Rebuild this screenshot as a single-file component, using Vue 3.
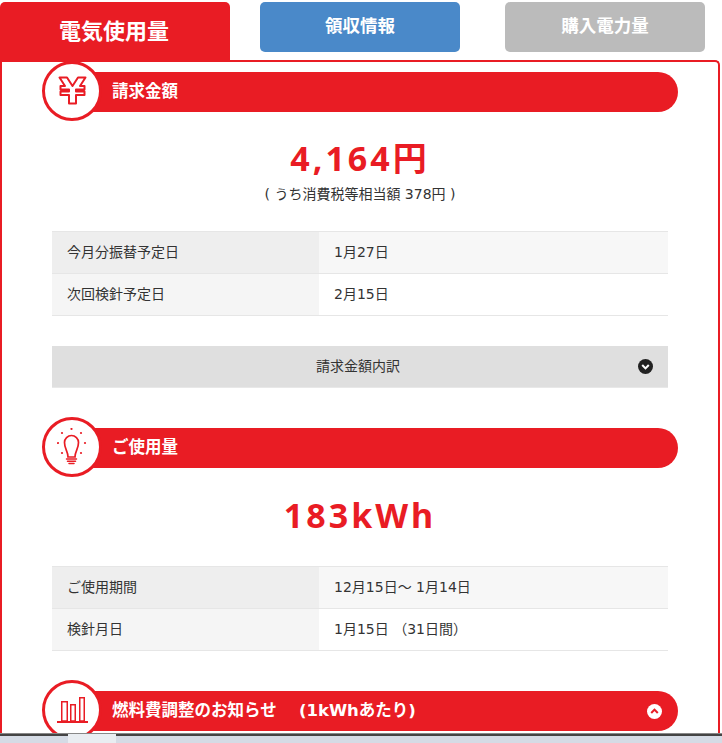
<script setup>
const billing = [
  { label: '今月分振替予定日', value: '1月27日' },
  { label: '次回検針予定日', value: '2月15日' },
]
const usage = [
  { label: 'ご使用期間', value: '12月15日～ 1月14日' },
  { label: '検針月日', value: '1月15日 （31日間）' },
]
const rays = [[14.5, 1], [5, 5], [24, 5], [1, 15], [28, 15], [5, 25], [24, 25]]
</script>

<template>
  <div class="page">
    <nav class="tabs">
      <div class="tab tab-active">電気使用量</div>
      <div class="tab tab-blue">領収情報</div>
      <div class="tab tab-grey">購入電力量</div>
    </nav>

    <main class="panel">
      <section class="section">
        <header class="head">
          <span class="badge">
            <svg viewBox="0 0 29 29" width="29" height="29">
              <path d="M1.500 1.500h7.500L14.500 10 20 1.500h7.500L22 10h4.500v3.500H18v2h8.500V19H18v8.500h-7V19H2.500v-3.500H11v-2H2.500V10H7z" fill="#fff" stroke="#e91c24" stroke-width="2" stroke-linejoin="round"/>
            </svg>
          </span>
          <div class="bar"><h2 class="bar-title">請求金額</h2></div>
        </header>
        <p class="amount">4,164円</p>
        <p class="note">( うち消費税等相当額 378円 )</p>
        <div class="table">
          <div v-for="row in billing" :key="row.label" class="row">
            <div class="cell-label">{{ row.label }}</div>
            <div class="cell-value">{{ row.value }}</div>
          </div>
        </div>
        <div class="details">
          <span>請求金額内訳</span>
          <svg class="chevron" viewBox="0 0 16 16" width="15" height="15">
            <circle cx="8" cy="8" r="8" fill="#222"/>
            <path d="M4.500 6.500 8 10l3.500-3.500" fill="none" stroke="#fff" stroke-width="2.200"/>
          </svg>
        </div>
      </section>

      <section class="section section-usage">
        <header class="head">
          <span class="badge">
            <svg viewBox="0 0 30 38" width="30" height="38" fill="none" stroke="#e91c24" stroke-width="1.500" stroke-linecap="round">
              <path d="M11 29c0-6-3.500-8-3.500-14.500a7 7 0 0 1 14 0C21.500 21 18 23 18 29z" stroke-width="1.700"/>
              <path d="M9.500 31h10M10.500 33.200h8M12 35.400h5" stroke-width="1.500"/>
              <circle v-for="(p, i) in rays" :key="i" :cx="p[0]" :cy="p[1]" r="1.100" fill="#e91c24" stroke="none"/>
            </svg>
          </span>
          <div class="bar"><h2 class="bar-title">ご使用量</h2></div>
        </header>
        <p class="amount amount-usage">183kWh</p>
        <div class="table">
          <div v-for="row in usage" :key="row.label" class="row">
            <div class="cell-label">{{ row.label }}</div>
            <div class="cell-value">{{ row.value }}</div>
          </div>
        </div>
      </section>

      <section class="section section-fuel">
        <header class="head">
          <span class="badge">
            <svg viewBox="0 0 31 26" width="31" height="26" fill="#fff" stroke="#e91c24" stroke-width="1.500">
              <path d="M4.750 4.750h5.500V24h-5.500zM13.750 7.750h4.500V24h-4.500zM22.750.75h4.500V24h-4.500z"/>
              <path d="M0 25h31" stroke-width="2"/>
            </svg>
          </span>
          <div class="bar">
            <h2 class="bar-title bar-title-wide">燃料費調整のお知らせ　 (1kWhあたり)</h2>
            <svg class="chevron-up" viewBox="0 0 16 16" width="15" height="15">
              <circle cx="8" cy="8" r="8" fill="#fff"/>
              <path d="M4.500 9.500 8 6l3.500 3.500" fill="none" stroke="#e91c24" stroke-width="2.200"/>
            </svg>
          </div>
        </header>
      </section>
    </main>

    <footer class="chrome"><span class="chrome-tab"></span></footer>
  </div>
</template>

<style scoped>
.page {
  width: 722px;
  height: 743px;
  display: flex;
  flex-direction: column;
  overflow: hidden;
  background: #fff;
  font-family: "DejaVu Sans", "Noto Sans CJK JP", sans-serif;
  color: #333;
}
.tabs {
  flex: none;
  height: 60px;
  padding-top: 2px;
  box-sizing: border-box;
  display: flex;
  align-items: flex-start;
}
.tab {
  box-sizing: border-box;
  display: flex;
  align-items: center;
  justify-content: center;
  color: #fff;
  font-weight: 700;
  border-radius: 5px;
  width: 200px;
  height: 50px;
  font-size: 17.500px;
  padding-bottom: 5px;
}
.tab-active {
  width: 230px;
  height: 58px;
  background: #e91c24;
  border-radius: 5px 5px 0 0;
  font-size: 22px;
  padding: 0 2px 5px 0;
}
.tab-blue { background: #4a89c9; margin-left: 30px; }
.tab-grey { background: #bbb; margin-left: 45px; }
.panel {
  flex: 1;
  min-height: 0;
  box-sizing: border-box;
  width: 720px;
  border: 2px solid #e91c24;
  border-bottom: 0;
  border-radius: 0 5px 0 0;
  padding: 10px 40px 0;
  overflow: hidden;
}
.section-usage { margin-top: 40px; }
.section-fuel { margin-top: 40px; }
.head {
  position: relative;
  height: 40px;
  padding-left: 30px;
}
.bar {
  height: 40px;
  background: #e91c24;
  border-radius: 0 20px 20px 0;
  display: flex;
  align-items: center;
  padding: 0 16px 1px 40px;
  box-sizing: border-box;
  color: #fff;
}
.badge {
  position: absolute;
  z-index: 1;
  left: 0;
  top: -11.500px;
  width: 60px;
  height: 60px;
  box-sizing: border-box;
  border: 3px solid #e91c24;
  border-radius: 50%;
  background: #fff;
  display: flex;
  align-items: center;
  justify-content: center;
}
.bar-title {
  margin: 0;
  font-size: 16.500px;
  line-height: 20px;
  font-weight: 700;
}
.bar-title-wide { flex: 1; }
.amount {
  margin: 25px 0 0;
  text-align: center;
  font-family: "Noto Sans", "Noto Sans CJK JP", sans-serif;
  font-size: 34px;
  letter-spacing: 3px;
  line-height: 42px;
  font-weight: 700;
  color: #e91c24;
}
.amount-usage { margin-bottom: 30px; margin-top: 26px; }
.note {
  margin: 5px 0 0;
  text-align: center;
  font-size: 14px;
  line-height: 20px;
}
.table {
  margin: 27px 10px 0;
  border-top: 1px solid #e6e6e6;
}
.amount-usage + .table { margin-top: 0; }
.row {
  display: grid;
  grid-template-columns: 267px 1fr;
  height: 42px;
  box-sizing: border-box;
  border-bottom: 1px solid #e6e6e6;
  font-size: 14px;
  line-height: 41px;
}
.cell-label { background: #eee; padding-left: 15px; }
.cell-value { background: #f7f7f7; padding-left: 15px; }
.row:nth-child(2) .cell-label { background: #f5f5f5; }
.row:nth-child(2) .cell-value { background: #fff; }
.details {
  position: relative;
  margin: 30px 10px 0;
  height: 42px;
  box-sizing: border-box;
  background: #dfdfdf;
  border-bottom: 1px solid #e8e8e8;
  display: flex;
  align-items: center;
  justify-content: center;
  font-size: 14px;
  padding: 0 4px 3px 0;
}
.chevron {
  position: absolute;
  right: 15px;
  top: 13px;
}
.chevron-up { flex: none; margin-top: 1px; }
.chrome {
  flex: none;
  height: 10px;
  box-sizing: border-box;
  background: #d5dbe5;
  border-top: 1px solid #888;
  box-shadow: inset 0 2px 0 #444;
  display: flex;
}
.chrome-tab {
  width: 48px;
  margin-left: 68px;
  background: #e9edf1;
}
</style>
